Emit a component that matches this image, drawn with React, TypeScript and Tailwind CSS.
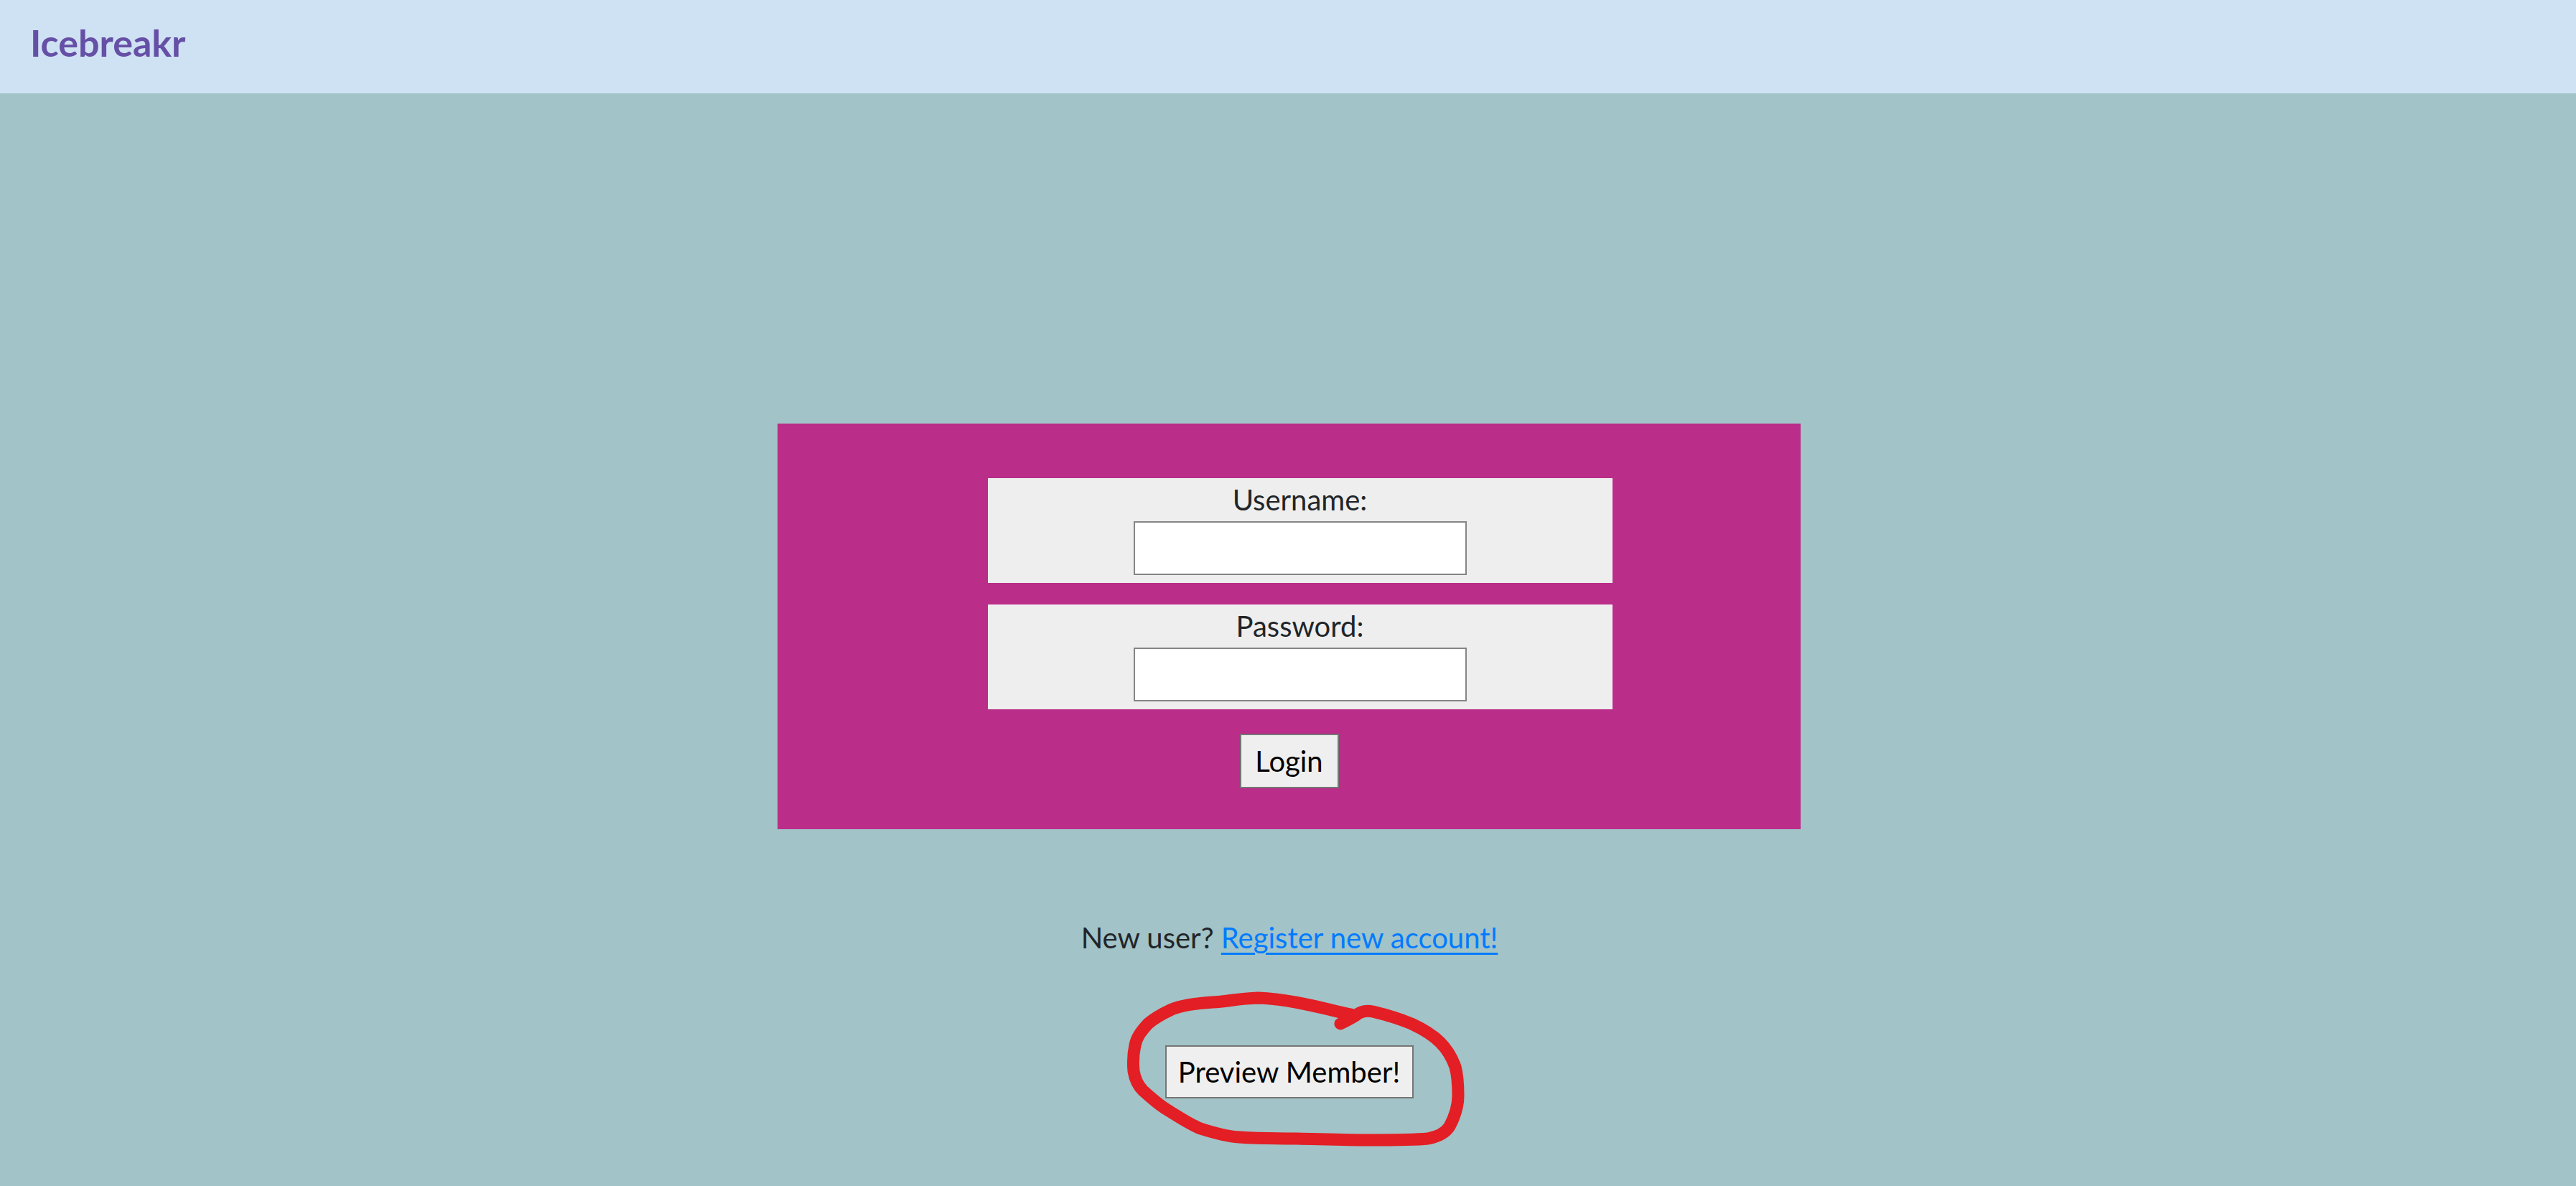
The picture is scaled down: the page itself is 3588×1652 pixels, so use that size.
import React from "react";

const font = { fontFamily: '"Segoe UI", Lato, "Open Sans", sans-serif' };

function Field({ label, type }: { label: string; type: string }) {
  return (
    <div className="ml-[30px] flex w-[870px] flex-col items-center bg-[#eeeeee] pb-[11px]">
      <label className="h-[60px] text-[40px] leading-[60px] text-[#212529]">{label}</label>
      <input
        type={type}
        className="h-[75px] w-[464px] border-2 border-[#858585] bg-white outline-none"
      />
    </div>
  );
}

export default function App() {
  return (
    <div className="min-h-screen bg-[#a2c3c7]" style={font}>
      {/* header */}
      <header className="h-[130px] bg-[#cfe2f3] px-[42px] pt-[28px]">
        <h1 className="text-[52px] font-bold leading-[62px] text-[#6650a6]">Icebreakr</h1>
      </header>

      <main className="flex flex-col items-center pt-[460px]">
        {/* login box */}
        <form className="ml-[3px] flex h-[565px] w-[1425px] flex-col items-center gap-[30px] bg-[#ba2d89] pt-[76px]">
          <Field label="Username:" type="text" />
          <Field label="Password:" type="password" />
          <button
            type="button"
            className="mt-[4px] h-[76px] w-[138px] border-2 border-[#767676] bg-[#efefef] text-[40px] leading-none text-black"
          >
            Login
          </button>
        </form>

        <p className="ml-[4px] mt-[121px] text-[40px] leading-[60px] text-[#212529]">
          New user?{" "}
          <a href="#" className="text-[#007bff] underline decoration-[3px] underline-offset-[6px]">
            Register new account!
          </a>
        </p>

        {/* preview button with the red scribble */}
        <div className="relative ml-[3px] mt-[120px]">
          <button
            type="button"
            className="h-[74px] w-[346px] border-2 border-[#767676] bg-[#efefef] text-[40px] leading-none text-black"
          >
            Preview Member!
          </button>
          <svg
            className="pointer-events-none absolute left-[-64px] top-[-87px]"
            width="500"
            height="240"
            viewBox="0 0 500 240"
            fill="none"
          >
            <path
              d="M327 45 C300 40 240 22 193 21 C165 22 150 26 130 27 C100 29 85 32 73 37 C58 44 48 50 40 57 C30 68 24 76 22 87 C19 100 19 112 20 123 C22 135 26 143 33 150 C44 160 55 170 67 177 C85 188 98 197 113 203 C135 210 150 214 167 215 C200 217 220 217 247 217 C290 218 320 219 347 219 C385 219 410 219 430 217 C445 214 455 208 460 200 C468 185 472 172 472 157 C472 140 471 128 468 117 C463 103 456 92 447 83 C435 71 420 63 407 57 C390 50 370 44 353 40 C343 38 336 40 330 45 C322 50 314 54 308 57"
              stroke="#e31e24"
              strokeWidth="17"
              strokeLinecap="round"
              strokeLinejoin="round"
            />
          </svg>
        </div>
      </main>
    </div>
  );
}
